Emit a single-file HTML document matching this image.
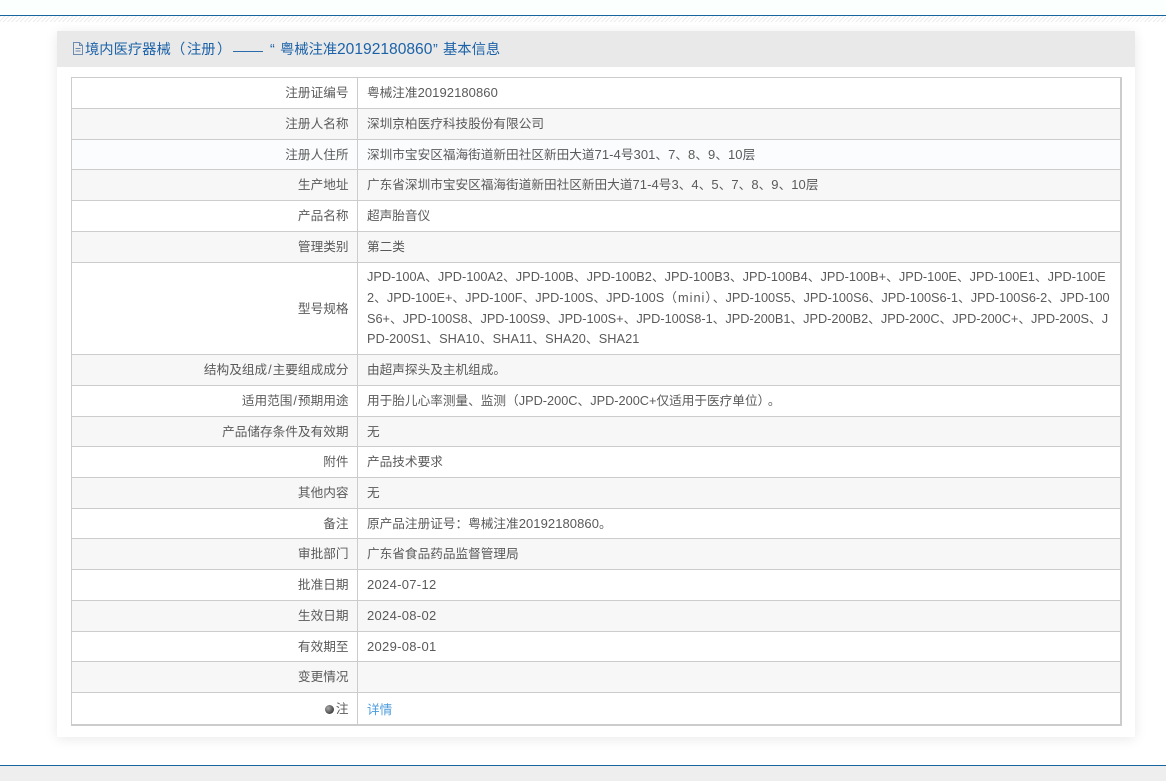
<!DOCTYPE html>
<html lang="zh-CN">
<head>
<meta charset="utf-8">
<title>境内医疗器械（注册）</title>
<style>
html,body{margin:0;padding:0;background:#fff}
body{position:relative;width:1166px;height:781px;overflow:hidden;font-family:"Liberation Sans","Noto Sans CJK SC",sans-serif;font-size:12.65px;color:#5a5a5a}
.top{position:absolute;left:0;top:0;width:1166px;height:15px;background:#fbfffe}
.tl{position:absolute;left:0;top:15px;width:1166px;height:1px;background:#17649f}
.hatch{position:absolute;left:0;top:16px;width:1166px;height:6px;background:repeating-linear-gradient(135deg,#e6e6e6 0 1px,#fff 1px 3px);opacity:.75}
.bl{position:absolute;left:0;top:765px;width:1166px;height:1px;background:#17649f}
.bot{position:absolute;left:0;top:766px;width:1166px;height:15px;background:#eee}
.panel{position:absolute;left:57px;top:31px;width:1078px;height:706px;background:#fff;box-shadow:0 2px 12px rgba(0,0,0,.09)}
.head{position:absolute;left:0;top:0;width:1078px;height:36px;background:#e9e9e9}
.t{position:absolute;top:1px;line-height:36px;font-size:14.3px;color:#1c62a8;white-space:pre}
.t.d{font-size:15.6px}
.ico{position:absolute;left:15px;top:11px}
.table{position:absolute;left:71px;top:77px;width:1051px;height:649px;border:1px solid #ccc;border-right:2px solid #ccc;border-bottom:2px solid #ccc;box-sizing:border-box;background:#fff}
.r{position:absolute;left:0;width:1048px;border-bottom:1px solid #ccc;box-sizing:border-box}
.g{background:#f7f7f7}
.l{position:absolute;left:0;top:0;bottom:0;width:286px;border-right:1px solid #ccc;display:flex;align-items:center;justify-content:flex-end;padding:0 8.5px 0 0;box-sizing:border-box;white-space:nowrap;line-height:20px}
.v{position:absolute;left:295px;top:0;bottom:0;display:flex;align-items:center;white-space:nowrap;line-height:20px;box-sizing:border-box}
.n{font-size:13px;letter-spacing:.07px}
.dt{font-size:13px;letter-spacing:.3px}
.m{display:block;line-height:20.6px;white-space:pre;font-size:12.75px}
.w{letter-spacing:1px}
.s{padding:0 1px}
a{color:#4a9bdc;text-decoration:none;font-size:12.65px}
.dot{display:inline-block;width:9px;height:9px;border-radius:50%;background:radial-gradient(circle at 35% 35%,#aaa,#444 70%);margin-right:2px}
</style>
</head>
<body>
<div class="top"></div>
<div class="tl"></div>
<div class="hatch"></div>
<div class="panel">
  <div class="head">
    <svg class="ico" width="12" height="13" viewBox="0 0 12 13" fill="none" stroke="#6b8cae" stroke-width="1"><path d="M1.5.5h6l3 3v9h-9zM7.5.5v3h3M3.5 6.5h5M3.5 9h5"/></svg>
    <span class="t" style="left:28px">境内医疗器械</span>
    <span class="t" style="left:114px">（</span>
    <span class="t" style="left:130px">注册</span>
    <span class="t" style="left:160px">）</span>
    <span class="t" style="left:176px;display:inline-block;transform:scaleX(1.07);transform-origin:left center;letter-spacing:0;font-size:14px">——</span>
    <span class="t" style="left:213px">“</span>
    <span class="t" style="left:223px">粤械注准</span>
    <span class="t d" style="left:280px">20192180860</span>
    <span class="t" style="left:376px">”</span>
    <span class="t" style="left:386px">基本信息</span>
  </div>
</div>
<div class="table">
  <div class="r" style="top:0;height:31px"><div class="l">注册证编号</div><div class="v"><span>粤械注准<span class="n">20192180860</span></span></div></div>
  <div class="r g" style="top:31px;height:31px"><div class="l">注册人名称</div><div class="v">深圳京柏医疗科技股份有限公司</div></div>
  <div class="r" style="top:62px;height:30px;background:#fbfcfe"><div class="l">注册人住所</div><div class="v"><span>深圳市宝安区福海街道新田社区新田大道<span class="n">71-4</span>号<span class="n">301</span>、<span class="n">7</span>、<span class="n">8</span>、<span class="n">9</span>、<span class="n">10</span>层</span></div></div>
  <div class="r g" style="top:92px;height:31px"><div class="l">生产地址</div><div class="v"><span>广东省深圳市宝安区福海街道新田社区新田大道<span class="n">71-4</span>号<span class="n">3</span>、<span class="n">4</span>、<span class="n">5</span>、<span class="n">7</span>、<span class="n">8</span>、<span class="n">9</span>、<span class="n">10</span>层</span></div></div>
  <div class="r" style="top:123px;height:31px"><div class="l">产品名称</div><div class="v">超声胎音仪</div></div>
  <div class="r g" style="top:154px;height:31px"><div class="l">管理类别</div><div class="v">第二类</div></div>
  <div class="r" style="top:185px;height:92px"><div class="l">型号规格</div><div class="v"><div><span class="m">JPD-100A、JPD-100A2、JPD-100B、JPD-100B2、JPD-100B3、JPD-100B4、JPD-100B+、JPD-100E、JPD-100E1、JPD-100E</span><span class="m">2、JPD-100E+、JPD-100F、JPD-100S、JPD-100S<span class="w">（mini）</span>、JPD-100S5、JPD-100S6、JPD-100S6-1、JPD-100S6-2、JPD-100</span><span class="m" style="letter-spacing:-.02px">S6+、JPD-100S8、JPD-100S9、JPD-100S+、JPD-100S8-1、JPD-200B1、JPD-200B2、JPD-200C、JPD-200C+、JPD-200S、J</span><span class="m" style="letter-spacing:.06px">PD-200S1、SHA10、SHA11、SHA20、SHA21</span></div></div></div>
  <div class="r g" style="top:277px;height:31px"><div class="l"><span>结构及组成<span class="s">/</span>主要组成成分</span></div><div class="v">由超声探头及主机组成。</div></div>
  <div class="r" style="top:308px;height:31px"><div class="l"><span>适用范围<span class="s">/</span>预期用途</span></div><div class="v"><span>用于胎儿心率测量、监测（<span class="m" style="display:inline">JPD-200C</span>、<span class="m" style="display:inline">JPD-200C+</span>仅适用于医疗单位<span style="letter-spacing:4px">）</span>。</span></div></div>
  <div class="r g" style="top:339px;height:30px"><div class="l">产品储存条件及有效期</div><div class="v">无</div></div>
  <div class="r" style="top:369px;height:31px"><div class="l">附件</div><div class="v">产品技术要求</div></div>
  <div class="r g" style="top:400px;height:31px"><div class="l">其他内容</div><div class="v">无</div></div>
  <div class="r" style="top:431px;height:30px"><div class="l">备注</div><div class="v"><span>原产品注册证号：粤械注准<span class="n">20192180860</span>。</span></div></div>
  <div class="r g" style="top:461px;height:31px"><div class="l">审批部门</div><div class="v">广东省食品药品监督管理局</div></div>
  <div class="r" style="top:492px;height:31px"><div class="l">批准日期</div><div class="v"><span class="dt">2024-07-12</span></div></div>
  <div class="r g" style="top:523px;height:31px"><div class="l">生效日期</div><div class="v"><span class="dt">2024-08-02</span></div></div>
  <div class="r" style="top:554px;height:30px"><div class="l">有效期至</div><div class="v"><span class="dt">2029-08-01</span></div></div>
  <div class="r g" style="top:584px;height:31px"><div class="l">变更情况</div><div class="v"></div></div>
  <div class="r" style="top:615px;height:32px;border-bottom:0"><div class="l"><span class="dot"></span>注</div><div class="v" style="padding-top:2px"><a>详情</a></div></div>
</div>
<div class="bl"></div>
<div class="bot"></div>
</body>
</html>
